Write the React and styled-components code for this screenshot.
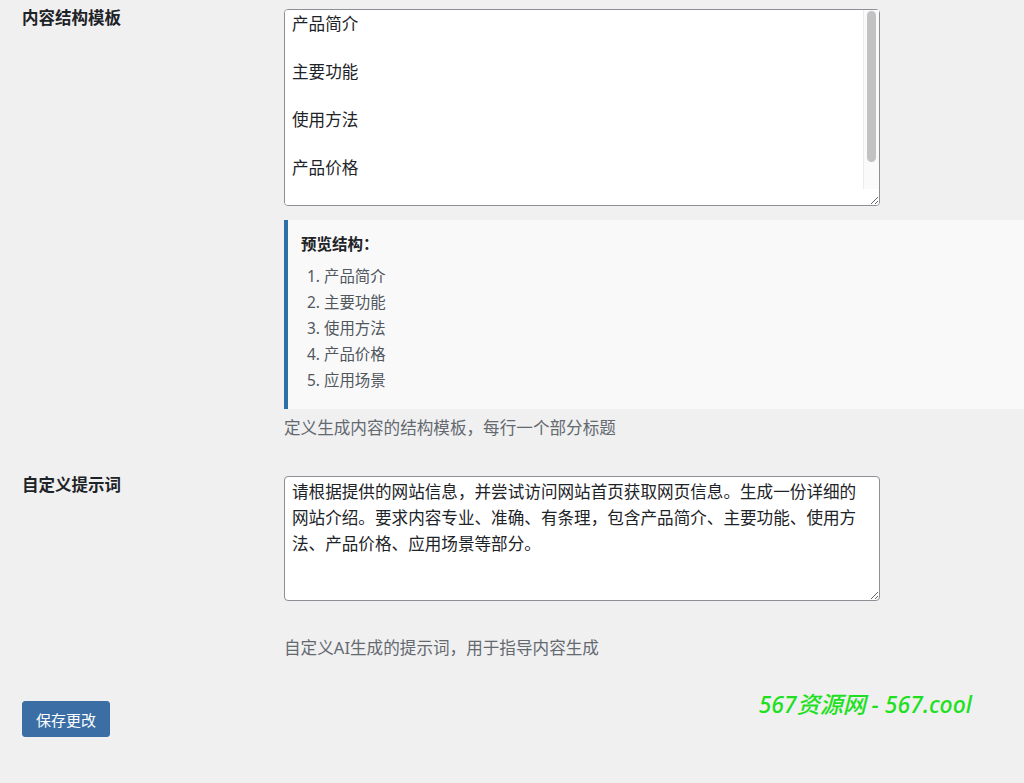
import * as React from 'react'
import styled, { createGlobalStyle } from 'styled-components'

const sections = ['产品简介', '主要功能', '使用方法', '产品价格', '应用场景']

const promptText =
  '请根据提供的网站信息，并尝试访问网站首页获取网页信息。生成一份详细的网站介绍。要求内容专业、准确、有条理，包含产品简介、主要功能、使用方法、产品价格、应用场景等部分。'

export default function App() {
  return (
    <Page>
      <GlobalStyle />
      <Row $top={9}>
        <Label htmlFor="structure">内容结构模板</Label>
        <Field>
          <TextAreaWrap>
            <TextArea
              id="structure"
              $height={197}
              $lineHeight={24}
              defaultValue={sections.join('\n\n')}
            />
            {/* the browser hides native scrollbars, so the bar is drawn over the field */}
            <ScrollTrack aria-hidden="true">
              <ScrollThumb style={{ height: 151 }} />
            </ScrollTrack>
          </TextAreaWrap>
          <Preview>
            <PreviewTitle>预览结构：</PreviewTitle>
            <PreviewList>
              {sections.map((s) => (
                <li key={s}>{s}</li>
              ))}
            </PreviewList>
          </Preview>
          <Description $gap={7}>定义生成内容的结构模板，每行一个部分标题</Description>
        </Field>
      </Row>

      <Row $top={36}>
        <Label htmlFor="prompt">自定义提示词</Label>
        <Field>
          <TextArea id="prompt" $height={125} $lineHeight={26} defaultValue={promptText} />
          <Description $gap={35}>自定义AI生成的提示词，用于指导内容生成</Description>
        </Field>
      </Row>

      <Footer>
        <SaveButton type="button">保存更改</SaveButton>
        <Watermark>567资源网 - 567.cool</Watermark>
      </Footer>
    </Page>
  )
}

const GlobalStyle = createGlobalStyle`
  html, body {
    margin: 0;
    background: #f0f0f1;
  }

  body {
    font-family: "Noto Sans", "Noto Sans CJK SC", sans-serif;
    color: #1d2327;
  }
`

const Page = styled.div`
  box-sizing: border-box;
  min-height: 783px;
  padding-left: 22px;
`

const Row = styled.div`
  display: grid;
  grid-template-columns: 262px 1fr;
  padding-top: ${({ $top }) => $top}px;
`

const Label = styled.label`
  margin-top: -3px;
  font-size: 16.5px;
  font-weight: 700;
  line-height: 24px;
  color: #1d2327;
`

const Field = styled.div`
  display: flex;
  flex-direction: column;
  align-items: flex-start;
`

const TextAreaWrap = styled.div`
  position: relative;
  display: flex;
`

const TextArea = styled.textarea`
  box-sizing: border-box;
  width: 596px;
  height: ${({ $height }) => $height}px;
  margin: 0;
  padding: 2px 9px 2px 7px;
  border: 1px solid #8c8f94;
  border-radius: 4px;
  background: #fff;
  color: #1d2327;
  font-family: "Noto Sans", "Noto Sans CJK SC", sans-serif;
  font-size: 16.6px;
  line-height: ${({ $lineHeight }) => $lineHeight}px;
  outline: none;
`

const ScrollTrack = styled.div`
  position: absolute;
  top: 1px;
  right: 1px;
  bottom: 17px;
  width: 16px;
  box-sizing: border-box;
  border-left: 1px solid #ebebeb;
  background: #fafafa;
  pointer-events: none;
`

const ScrollThumb = styled.div`
  margin: 1px 0 0 3px;
  width: 9px;
  border-radius: 5px;
  background: #c2c2c2;
`

const Preview = styled.div`
  box-sizing: border-box;
  align-self: stretch;
  margin-top: 14px;
  padding: 12px 15px 15px 13px;
  border-left: 4px solid #2f6fa8;
  background: #f9f9f9;
`

const PreviewTitle = styled.div`
  font-size: 15.5px;
  font-weight: 700;
  line-height: 24px;
  color: #1d2327;
`

const PreviewList = styled.ol`
  margin: 8px 0 0;
  padding-left: 23px;
  font-size: 15.4px;
  line-height: 26px;
  color: #50575e;
`

const Description = styled.p`
  margin: ${({ $gap }) => $gap}px 0 0;
  font-size: 16.6px;
  line-height: 24px;
  color: #646970;
`

const Footer = styled.div`
  display: flex;
  justify-content: space-between;
  align-items: flex-start;
  padding: 41px 52px 0 0;
`

const SaveButton = styled.button`
  height: 36px;
  padding: 0 13px;
  border: 1px solid #3a6ea5;
  border-radius: 3px;
  background: #3a6ea5;
  color: #fff;
  font-family: "Noto Sans", "Noto Sans CJK SC", sans-serif;
  font-size: 15px;
  cursor: pointer;
`

const Watermark = styled.div`
  margin-top: -12px;
  font-family: "Noto Sans", "Noto Sans CJK SC", sans-serif;
  font-size: 23px;
  font-style: italic;
  font-weight: 500;
  line-height: 30px;
  color: #1fe01f;
`
